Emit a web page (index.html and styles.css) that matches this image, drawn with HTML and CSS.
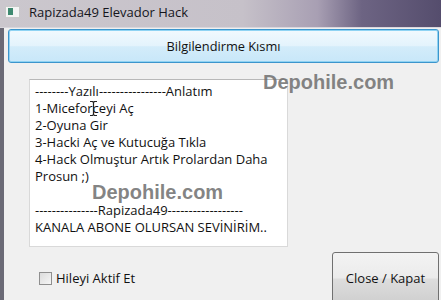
FILE: index.html
```html
<!DOCTYPE html>
<html lang="tr">
<head>
  <meta charset="UTF-8" />
  <title>Rapizada49 Elevador Hack</title>
  <link rel="stylesheet" href="styles.css">
</head>
<body>
  <div class="window">
    <!-- pencere başlığı -->
    <div class="titlebar">
      <span class="app-icon"><span class="app-icon-inner"></span></span>
      <span class="title">Rapizada49 Elevador Hack</span>
    </div>

    <div class="client">
      <button class="info-btn" type="button">Bilgilendirme Kısmı</button>

      <div class="textbox">
        <div class="line">--------Yazılı----------------Anlatım</div>
        <div class="line">1-Miceforceyi Aç</div>
        <div class="line">2-Oyuna Gir</div>
        <div class="line">3-Hacki Aç ve Kutucuğa Tıkla</div>
        <div class="line">4-Hack Olmuştur Artık Prolardan Daha Prosun ;)</div>
        <div class="line">&nbsp;</div>
        <div class="line">---------------Rapizada49------------------</div>
        <div class="line">KANALA ABONE OLURSAN SEVİNİRİM..</div>
      </div>

      <div class="bottom-row">
        <label class="check">
          <span class="check-box"></span>
          <span class="check-label">Hileyi Aktif Et</span>
        </label>
        <button class="close-btn" type="button">Close / Kapat</button>
      </div>
    </div>

    <!-- fare imleci (metin üstünde) -->
    <svg class="ibeam" width="9" height="17" viewBox="0 0 9 17">
      <path d="M1 1.5h2.5l1 1 1-1H8M1 15.5h2.5l1-1 1 1H8M4.5 2.5v12" fill="none" stroke="#222" stroke-width="1.2"/>
    </svg>

    <!-- video filigranı -->
    <div class="watermark wm-top">Depohile.com</div>
    <div class="watermark wm-mid">Depohile.com</div>
  </div>
</body>
</html>
```

FILE: styles.css
```css
body {
  margin: 0;
  padding: 0;
  width: 441px;
  height: 300px;
  overflow: hidden;
  font-family: 'Open Sans', 'Noto Sans', sans-serif;
  background-color: #f0f0f0;
}
.window {
  position: relative;
  width: 441px;
  height: 300px;
  overflow: hidden;
}
.titlebar {
  height: 28px;
  display: flex;
  align-items: center;
  padding-left: 5px;
  box-sizing: border-box;
  background: linear-gradient(90deg, #cbc7cd 0%, #c6c1c9 55%, #a89fb3 72%, #6d6483 82%, #554d6d 100%);
  border-bottom: 1px solid #d8d6dc;
}
.app-icon {
  width: 15px;
  height: 12px;
  background-color: #f4f4f4;
  border: 1px solid #c9c9c9;
  box-sizing: border-box;
  display: flex;
  align-items: center;
  padding-left: 2px;
  margin-top: -4px;
}
.app-icon-inner {
  width: 5px;
  height: 7px;
  background-color: #3f8a70;
}
.title {
  margin-left: 9px;
  margin-top: -4px;
  font-size: 13px;
  color: #15151c;
}
.client {
  border-left: 4px solid #6b6a76;
  height: 272px;
  box-sizing: border-box;
  padding: 1px 2px 0 4px;
}
.info-btn {
  display: block;
  width: 100%;
  height: 34px;
  border: 1px solid #3c95cc;
  border-radius: 3px;
  box-shadow: inset 0 0 0 1px #8fd3f3;
  background: linear-gradient(180deg, #f1f9fe 0%, #e3f3fc 50%, #d3ecfa 52%, #c8e7f9 100%);
  font-family: inherit;
  font-size: 12.8px;
  color: #111111;
  padding: 0;
}
.textbox {
  margin: 16px 0 0 21px;
  width: 259px;
  height: 168px;
  box-sizing: border-box;
  background-color: #ffffff;
  border: 1px solid #d9d9d9;
  border-top-color: #b8b8b8;
  padding: 3px 4px 0 5px;
  font-size: 13px;
  line-height: 17px;
  color: #111111;
}
.bottom-row {
  display: flex;
  align-items: flex-start;
  justify-content: space-between;
  margin-top: 5px;
}
.check {
  display: flex;
  align-items: center;
  gap: 4px;
  margin: 17px 0 0 31px;
}
.check-box {
  width: 13px;
  height: 13px;
  box-sizing: border-box;
  border: 1px solid #8f8f8f;
  background: linear-gradient(135deg, #dcdcdc, #f6f6f6);
}
.check-label {
  font-size: 13px;
  color: #111111;
}
.close-btn {
  width: 107px;
  height: 52px;
  border: 1px solid #707070;
  border-radius: 3px;
  background: linear-gradient(180deg, #f3f3f3 0%, #ebebeb 50%, #dddddd 52%, #cfcfcf 100%);
  font-family: inherit;
  font-size: 13px;
  color: #111111;
  padding: 0;
}
.ibeam {
  position: absolute;
  left: 89px;
  top: 100px;
}
.watermark {
  position: absolute;
  font-family: 'Liberation Sans', Arial, sans-serif;
  font-weight: bold;
  font-size: 20px;
  line-height: 16px;
  color: rgba(110, 110, 110, 0.85);
}
.wm-top {
  left: 263px;
  top: 74px;
}
.wm-mid {
  left: 92px;
  top: 184px;
}
```
